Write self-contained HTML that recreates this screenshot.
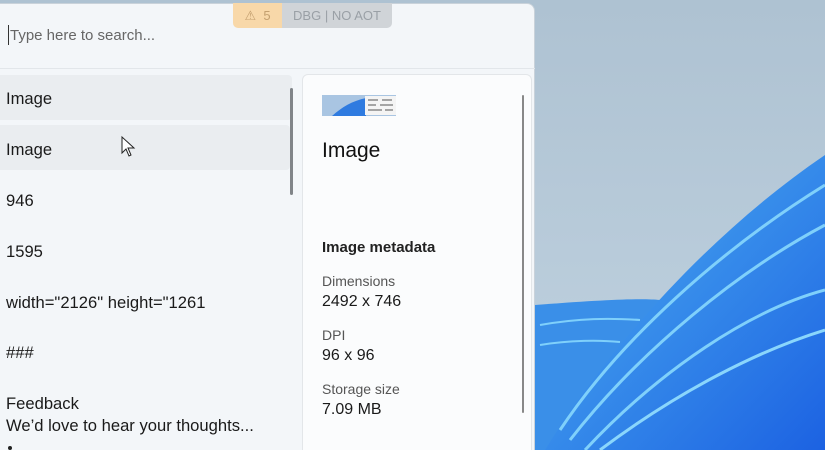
<!DOCTYPE html><html><head><style>
html,body{margin:0;width:825px;height:450px;overflow:hidden}
body{position:relative;background:#b3c6d5;font-family:"Liberation Sans",sans-serif}
.win{position:absolute;left:-2px;top:3px;width:537px;height:447px;background:#f3f6f9;border-radius:0 8px 0 0;border:1px solid #c9d2da;border-bottom:none;box-sizing:border-box}
.t{position:absolute;font-size:16.6px;color:#1a1a1a;left:6px}
.row{position:absolute;left:0;width:280px;height:45px;background:#eaedf0;border-radius:0 4px 4px 0}
.lbl{position:absolute;left:322px;font-size:14px;color:#555}
.val{position:absolute;left:322px;font-size:16px;color:#1a1a1a}
</style></head><body>
<svg style="position:absolute;left:0;top:0" width="825" height="450">
<defs><linearGradient id="g" x1="0" y1="0" x2="1" y2="1"><stop offset="0" stop-color="#4fb3f2"/><stop offset="1" stop-color="#1c62e2"/></linearGradient>
<linearGradient id="bg" x1="0" y1="0" x2="0" y2="1"><stop offset="0" stop-color="#aec2d2"/><stop offset="1" stop-color="#c0d2e0"/></linearGradient></defs>
<rect width="825" height="450" fill="url(#bg)"/>
<path d="M535 305 C600 300 640 298 660 300 L640 450 L535 450Z" fill="#3a8fe8"/>
<path d="M545 450 C600 360 700 240 825 155 L825 450Z" fill="url(#g)"/>
<path d="M560 430 C620 340 720 250 825 185" stroke="#7fd0fb" stroke-width="3" fill="none"/>
<path d="M570 440 C640 350 740 270 825 225" stroke="#7fd0fb" stroke-width="3" fill="none"/>
<path d="M585 450 C660 370 750 310 825 290" stroke="#7fd0fb" stroke-width="3" fill="none"/>
<path d="M600 450 C680 390 760 350 825 330" stroke="#8ad6fc" stroke-width="3" fill="none"/>
<path d="M540 325 C580 318 610 318 640 320" stroke="#7fd0fb" stroke-width="2" fill="none"/>
<path d="M540 345 C570 340 600 340 620 342" stroke="#7fd0fb" stroke-width="2" fill="none"/>
</svg>
<div class="win"></div>
<div style="position:absolute;left:0;top:68px;width:535px;height:1px;background:#e2e6ea"></div>
<div style="position:absolute;left:233px;top:3px;width:49px;height:25px;background:#f8d8a9;border-radius:0 0 0 5px;color:#c4a070;font-size:13px;line-height:25px;text-align:center">⚠&nbsp; 5</div>
<div style="position:absolute;left:282px;top:3px;width:110px;height:25px;background:#d0d4d8;border-radius:0 0 5px 0;color:#9aa0a6;font-size:13px;line-height:25px;text-align:center">DBG | NO AOT</div>
<div style="position:absolute;left:8px;top:25px;width:1px;height:20px;background:#333"></div>
<div style="position:absolute;left:10px;top:27px;font-size:15px;color:#666">Type here to search...</div>
<div class="row" style="top:75px;width:292px"></div>
<div class="row" style="top:125px;width:290px"></div>
<div class="t" style="top:89px">Image</div>
<div class="t" style="top:140px">Image</div>
<div class="t" style="top:191px">946</div>
<div class="t" style="top:242px">1595</div>
<div class="t" style="top:293px">width="2126" height="1261</div>
<div class="t" style="top:343px">###</div>
<div class="t" style="top:394px">Feedback</div>
<div class="t" style="top:416px">We’d love to hear your thoughts...</div>
<div style="position:absolute;left:8px;top:446px;width:4px;height:4px;border-radius:2px;background:#222"></div>
<svg style="position:absolute;left:120px;top:135px" width="16" height="24"><path d="M2 2 L2 18 L6 14 L9 21 L11 20 L8 13 L14 13Z" fill="#fff" stroke="#222" stroke-width="1"/></svg>
<div style="position:absolute;left:290px;top:88px;width:3px;height:107px;background:#808488;border-radius:2px"></div>
<div style="position:absolute;left:302px;top:74px;width:228px;height:380px;background:#fbfcfd;border:1px solid #e3e6e9;border-radius:6px"></div>
<div style="position:absolute;left:522px;top:95px;width:2px;height:318px;background:#888;border-radius:1px"></div>
<svg style="position:absolute;left:322px;top:95px" width="74" height="21"><rect width="74" height="21" fill="#a9c5e2"/><path d="M10 21 C20 12 30 6 44 3 L44 21Z" fill="#2f7be0"/><rect x="43" y="1" width="31" height="19" fill="#f4f4f4"/><g stroke="#555" stroke-width="1"><line x1="46" y1="5" x2="56" y2="5"/><line x1="60" y1="5" x2="70" y2="5"/><line x1="46" y1="10" x2="54" y2="10"/><line x1="58" y1="10" x2="71" y2="10"/><line x1="46" y1="15" x2="60" y2="15"/><line x1="63" y1="15" x2="71" y2="15"/></g></svg>
<div style="position:absolute;left:322px;top:139px;font-size:21px;color:#111">Image</div>
<div style="position:absolute;left:322px;top:239px;font-size:15px;font-weight:bold;color:#222">Image metadata</div>
<div class="lbl" style="top:273px">Dimensions</div>
<div class="val" style="top:293px">2492 x 746</div>
<div class="lbl" style="top:327px">DPI</div>
<div class="val" style="top:347px">96 x 96</div>
<div class="lbl" style="top:381px">Storage size</div>
<div class="val" style="top:401px">7.09 MB</div>
</body></html>
